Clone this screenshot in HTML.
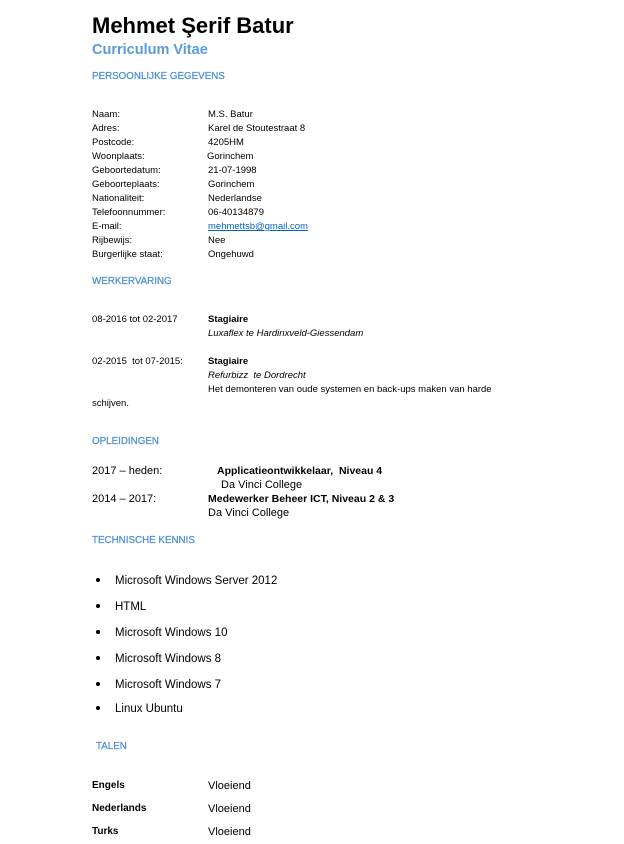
<!DOCTYPE html>
<html><head><meta charset="utf-8"><style>
body{margin:0;width:624px;height:844px;background:#fff;position:relative;overflow:hidden;font-family:"Liberation Sans",sans-serif;color:#000}
#w{position:absolute;left:0;top:2px;width:624px;height:842px}
.t{position:absolute;white-space:nowrap;line-height:14px;font-size:9.5px}
.h{color:#4f8fd0;font-size:9.8px;-webkit-text-stroke:0.25px #4f8fd0}
.b{font-weight:bold}
.i{font-style:italic}
.m{font-size:11px}
.l{font-size:11.5px}
.lb{font-size:10px}
.dot{position:absolute;width:4px;height:4px;border-radius:2px;background:#000}
a{color:#0563c1;text-decoration:underline}
</style></head><body><div id="w">
<div class="t b" style="left:92px;top:10px;line-height:28px;font-size:22px">Mehmet Şerif Batur</div>
<div class="t b" style="left:92px;top:39px;line-height:18px;font-size:14.5px;color:#5b9bd5">Curriculum Vitae</div>
<div class="t h" style="left:92px;top:68px">PERSOONLIJKE GEGEVENS</div>

<div class="t" style="left:92px;top:106px">Naam:</div><div class="t" style="left:208px;top:106px">M.S. Batur</div>
<div class="t" style="left:92px;top:120px">Adres:</div><div class="t" style="left:208px;top:120px">Karel de Stoutestraat 8</div>
<div class="t" style="left:92px;top:134px">Postcode:</div><div class="t" style="left:208px;top:134px">4205HM</div>
<div class="t" style="left:92px;top:148px">Woonplaats:</div><div class="t" style="left:207px;top:148px">Gorinchem</div>
<div class="t" style="left:92px;top:162px">Geboortedatum:</div><div class="t" style="left:208px;top:162px">21-07-1998</div>
<div class="t" style="left:92px;top:176px">Geboorteplaats:</div><div class="t" style="left:208px;top:176px">Gorinchem</div>
<div class="t" style="left:92px;top:190px">Nationaliteit:</div><div class="t" style="left:208px;top:190px">Nederlandse</div>
<div class="t" style="left:92px;top:204px">Telefoonnummer:</div><div class="t" style="left:208px;top:204px">06-40134879</div>
<div class="t" style="left:92px;top:218px">E-mail:</div><div class="t" style="left:208px;top:218px"><a>mehmettsb@gmail.com</a></div>
<div class="t" style="left:92px;top:232px">Rijbewijs:</div><div class="t" style="left:208px;top:232px">Nee</div>
<div class="t" style="left:92px;top:246px">Burgerlijke staat:</div><div class="t" style="left:208px;top:246px">Ongehuwd</div>

<div class="t h" style="left:92px;top:273px">WERKERVARING</div>
<div class="t" style="left:92px;top:311px">08-2016 tot 02-2017</div><div class="t b" style="left:208px;top:311px">Stagiaire</div>
<div class="t i" style="left:208px;top:325px">Luxaflex te Hardinxveld-Giessendam</div>
<div class="t" style="left:92px;top:353px">02-2015&nbsp; tot 07-2015:</div><div class="t b" style="left:208px;top:353px">Stagiaire</div>
<div class="t i" style="left:208px;top:367px">Refurbizz&nbsp; te Dordrecht</div>
<div class="t" style="left:208px;top:381px">Het demonteren van oude systemen en back-ups maken van harde</div>
<div class="t" style="left:92px;top:395px">schijven.</div>

<div class="t h" style="left:92px;top:433px">OPLEIDINGEN</div>
<div class="t m" style="left:92px;top:462px">2017 – heden:</div><div class="t m b" style="left:217px;top:462px;font-size:10.5px">Applicatieontwikkelaar,&nbsp; Niveau 4</div>
<div class="t m" style="left:221px;top:476px">Da Vinci College</div>
<div class="t m" style="left:92px;top:490px">2014 – 2017:</div><div class="t m b" style="left:208px;top:490px;font-size:10.5px">Medewerker Beheer ICT, Niveau 2 &amp; 3</div>
<div class="t m" style="left:208px;top:504px">Da Vinci College</div>

<div class="t h" style="left:92px;top:532px">TECHNISCHE KENNIS</div>
<div class="dot" style="left:96px;top:576px"></div><div class="t l" style="left:115px;top:572px">Microsoft Windows Server 2012</div>
<div class="dot" style="left:96px;top:602px"></div><div class="t l" style="left:115px;top:598px">HTML</div>
<div class="dot" style="left:96px;top:628px"></div><div class="t l" style="left:115px;top:624px">Microsoft Windows 10</div>
<div class="dot" style="left:96px;top:654px"></div><div class="t l" style="left:115px;top:650px">Microsoft Windows 8</div>
<div class="dot" style="left:96px;top:680px"></div><div class="t l" style="left:115px;top:676px">Microsoft Windows 7</div>
<div class="dot" style="left:96px;top:704px"></div><div class="t l" style="left:115px;top:700px">Linux Ubuntu</div>

<div class="t h" style="left:96px;top:738px">TALEN</div>
<div class="t b lb" style="left:92px;top:777px">Engels</div><div class="t m" style="left:208px;top:777px">Vloeiend</div>
<div class="t b lb" style="left:92px;top:800px">Nederlands</div><div class="t m" style="left:208px;top:800px">Vloeiend</div>
<div class="t b lb" style="left:92px;top:823px">Turks</div><div class="t m" style="left:208px;top:823px">Vloeiend</div>
</div></body></html>
